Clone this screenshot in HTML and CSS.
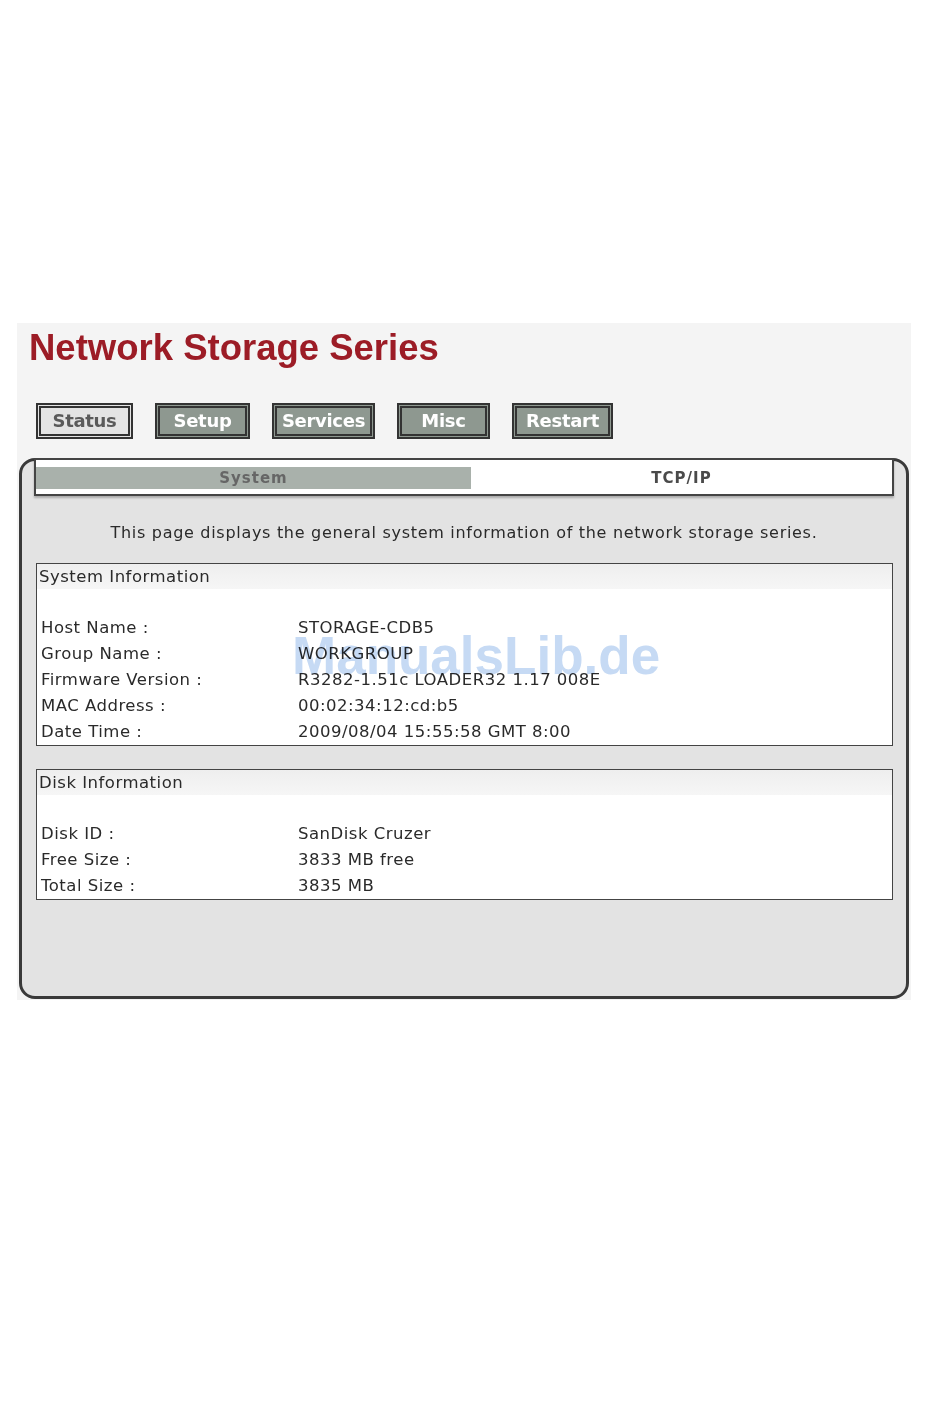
FILE: index.html
```html
<!DOCTYPE html>
<html lang="en">
<head>
    <meta charset="UTF-8">
    <meta name="viewport" content="width=device-width, initial-scale=1.0">
    <title>Network Storage Series</title>
    <link rel="stylesheet" href="styles.css">
</head>
<body>
    <div class="page">
        <h1 class="title">Network Storage Series</h1>

        <nav class="nav">
            <button class="nav-btn btn-status active">Status</button>
            <button class="nav-btn btn-setup">Setup</button>
            <button class="nav-btn btn-services">Services</button>
            <button class="nav-btn btn-misc">Misc</button>
            <button class="nav-btn btn-restart">Restart</button>
        </nav>

        <div class="panel">
            <div class="tab-bar">
                <div class="tab active">System</div>
                <div class="tab">TCP/IP</div>
            </div>

            <p class="intro">This page displays the general system information of the network storage series.</p>

            <section class="info-box">
                <div class="info-head">System Information</div>
                <div class="info-spacer"></div>
                <div class="info-row"><span>Host Name :</span><span>STORAGE-CDB5</span></div>
                <div class="info-row"><span>Group Name :</span><span>WORKGROUP</span></div>
                <div class="info-row"><span>Firmware Version :</span><span>R3282-1.51c LOADER32 1.17 008E</span></div>
                <div class="info-row"><span>MAC Address :</span><span>00:02:34:12:cd:b5</span></div>
                <div class="info-row"><span>Date Time :</span><span>2009/08/04 15:55:58 GMT 8:00</span></div>
            </section>

            <section class="info-box disk">
                <div class="info-head">Disk Information</div>
                <div class="info-spacer"></div>
                <div class="info-row"><span>Disk ID :</span><span>SanDisk Cruzer</span></div>
                <div class="info-row"><span>Free Size :</span><span>3833 MB free</span></div>
                <div class="info-row"><span>Total Size :</span><span>3835 MB</span></div>
            </section>
        </div>

        <div class="watermark">ManualsLib.de</div>
    </div>
</body>
</html>
```

FILE: styles.css
```css
body {
    margin: 0;
    padding: 0;
    background-color: #ffffff;
    font-family: "DejaVu Sans", Verdana, sans-serif;
    color: #222222;
}

.page {
    position: relative;
    width: 894px;
    margin: 323px 0 0 17px;
    padding-bottom: 1px;
    background-color: #f4f4f4;
}

.title {
    margin: 0;
    padding: 5px 0 0 12px;
    font-family: "Liberation Sans", Arial, sans-serif;
    font-size: 36.5px;
    line-height: 40px;
    font-weight: bold;
    color: #9c1c26;
}

.nav {
    display: flex;
    gap: 22px;
    margin: 35px 0 0 19px;
}

.nav-btn {
    height: 36px;
    padding: 0;
    border: 5px double #333333;
    background-color: #8e9890;
    color: #ffffff;
    font-family: "DejaVu Sans", Verdana, sans-serif;
    font-size: 18px;
    font-weight: bold;
    line-height: 26px;
    letter-spacing: -0.3px;
    cursor: pointer;
}

.nav-btn.active {
    background-color: #e4e4e4;
    color: #5a5a5a;
}

.btn-status { width: 97px; }
.btn-setup { width: 95px; }
.btn-services { width: 103px; }
.btn-misc { width: 93px; }
.btn-restart { width: 101px; }

.panel {
    margin: 19px 2px 0 2px;
    padding: 0 0 96px 0;
    background-color: #e3e3e3;
    border: 3px solid #3a3a3a;
    border-radius: 16px;
}

.tab-bar {
    display: grid;
    grid-template-columns: 435px 1fr;
    margin: -3px 12px 0 12px;
    padding: 7px 0 5px 0;
    background-color: #ffffff;
    border: 2px solid #444444;
    box-shadow: 0 2px 2px rgba(0, 0, 0, 0.25);
}

.tab {
    height: 22px;
    line-height: 22px;
    text-align: center;
    font-size: 15px;
    font-weight: bold;
    letter-spacing: 1px;
    color: #4a4a4a;
}

.tab.active {
    background-color: #a9b1ab;
    color: #666666;
}

.intro {
    margin: 27px 0 20px 0;
    font-size: 16px;
    line-height: 20px;
    letter-spacing: 0.7px;
    text-align: center;
    color: #2a2a2a;
}

.info-box {
    margin: 0 13px 0 14px;
    background-color: #ffffff;
    border: 1px solid #444444;
    font-size: 16.5px;
    letter-spacing: 0.5px;
    color: #2a2a2a;
}

.info-box.disk {
    margin-top: 23px;
}

.info-head {
    height: 25px;
    line-height: 25px;
    padding-left: 2px;
    background: linear-gradient(#eeeeee, #f6f6f6);
}

.info-spacer {
    height: 26px;
}

.info-row {
    display: grid;
    grid-template-columns: 257px 1fr;
    height: 26px;
    line-height: 26px;
    padding-left: 4px;
}

.watermark {
    position: absolute;
    left: 275px;
    top: 306px;
    font-family: "Liberation Sans", Arial, sans-serif;
    font-size: 53px;
    line-height: 54px;
    font-weight: bold;
    color: #c6daf4;
    mix-blend-mode: multiply;
    pointer-events: none;
}
```
